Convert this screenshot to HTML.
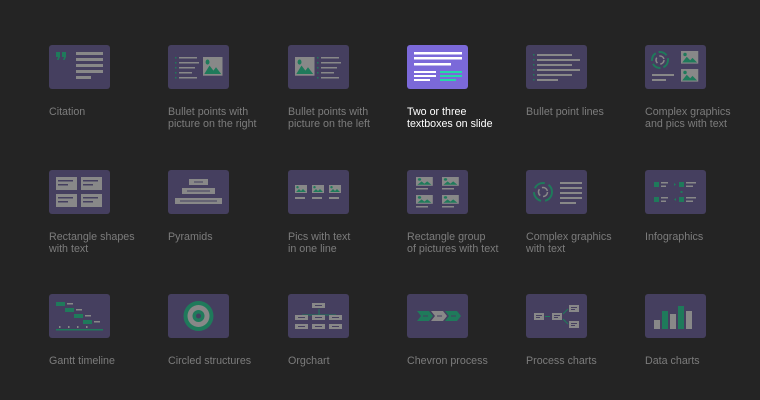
<!DOCTYPE html>
<html><head><style>
body{margin:0;background:#242424;width:760px;height:400px;overflow:hidden;font-family:"Liberation Sans",sans-serif}
.c{position:absolute;width:120px}
.c svg{display:block;width:61px;height:44px}
.l{margin-top:17px;font-size:10.7px;line-height:12px;color:#7c7c7c}
.a .l{color:#fff}
</style></head><body>
<svg width="0" height="0" style="position:absolute"><defs>
<g id="pic"><rect width="15" height="11" fill="#888"/><circle cx="3.5" cy="3" r="1.5" fill="#1f7a5b"/><path d="M1 10L5 5L8 8L10 6L14 10Z" fill="#1f7a5b"/></g>
<g id="spic"><rect width="12" height="8" fill="#888"/><circle cx="2.5" cy="2.2" r="1.2" fill="#1f7a5b"/><path d="M1 7L4 4L6 6L8 4L11 7Z" fill="#1f7a5b"/></g>
</defs></svg>

<div class="c" style="left:49px;top:45px"><svg viewBox="0 0 61 44"><rect width="61" height="44" rx="3" fill="#453f5f"/><path d="M7 7h4v5l-1.5 3h-1.5l1-3h-2z" fill="#1f7a5b"/><path d="M13 7h4v5l-1.5 3h-1.5l1-3h-2z" fill="#1f7a5b"/><g fill="#888"><rect x="27" y="7" width="27" height="3"/><rect x="27" y="13" width="27" height="3"/><rect x="27" y="19" width="27" height="3"/><rect x="27" y="25" width="27" height="3"/><rect x="27" y="31" width="15" height="3"/></g></svg><div class="l">Citation</div></div>

<div class="c" style="left:168px;top:45px"><svg viewBox="0 0 61 44"><rect width="61" height="44" rx="3" fill="#453f5f"/><g fill="#1f7a5b"><rect x="7" y="12" width="1.5" height="1.5"/><rect x="7" y="17" width="1.5" height="1.5"/><rect x="7" y="22" width="1.5" height="1.5"/><rect x="7" y="27" width="1.5" height="1.5"/><rect x="7" y="32" width="1.5" height="1.5"/></g><g fill="#888"><rect x="11" y="12" width="18" height="1.5"/><rect x="11" y="17" width="20" height="1.5"/><rect x="11" y="22" width="16" height="1.5"/><rect x="11" y="27" width="13" height="1.5"/><rect x="11" y="32" width="18" height="1.5"/></g><use href="#pic" transform="translate(35,12) scale(1.3,1.7)"/></svg><div class="l">Bullet points with<br>picture on the right</div></div>

<div class="c" style="left:288px;top:45px"><svg viewBox="0 0 61 44"><rect width="61" height="44" rx="3" fill="#453f5f"/><use href="#pic" transform="translate(7,12) scale(1.3,1.7)"/><g fill="#1f7a5b"><rect x="29" y="12" width="1.5" height="1.5"/><rect x="29" y="17" width="1.5" height="1.5"/><rect x="29" y="22" width="1.5" height="1.5"/><rect x="29" y="27" width="1.5" height="1.5"/><rect x="29" y="32" width="1.5" height="1.5"/></g><g fill="#888"><rect x="33" y="12" width="18" height="1.5"/><rect x="33" y="17" width="20" height="1.5"/><rect x="33" y="22" width="16" height="1.5"/><rect x="33" y="27" width="13" height="1.5"/><rect x="33" y="32" width="18" height="1.5"/></g></svg><div class="l">Bullet points with<br>picture on the left</div></div>

<div class="c a" style="left:407px;top:45px"><svg viewBox="0 0 61 44"><rect width="61" height="44" rx="3" fill="#7b69d9"/><g fill="#fff"><rect x="7" y="7" width="48" height="2.5"/><rect x="7" y="12" width="48" height="2.5"/><rect x="7" y="18" width="37" height="2.5"/><rect x="7" y="26" width="22" height="2"/><rect x="7" y="30" width="22" height="2"/><rect x="7" y="34" width="16" height="2"/></g><g fill="#25d9a7"><rect x="33" y="26" width="22" height="2"/><rect x="33" y="30" width="22" height="2"/><rect x="33" y="34" width="16" height="2"/></g></svg><div class="l">Two or three<br>textboxes on slide</div></div>

<div class="c" style="left:526px;top:45px"><svg viewBox="0 0 61 44"><rect width="61" height="44" rx="3" fill="#453f5f"/><g fill="#1f7a5b"><rect x="7" y="9" width="1.5" height="1.5"/><rect x="7" y="14" width="1.5" height="1.5"/><rect x="7" y="19" width="1.5" height="1.5"/><rect x="7" y="24" width="1.5" height="1.5"/><rect x="7" y="29" width="1.5" height="1.5"/><rect x="7" y="34" width="1.5" height="1.5"/></g><g fill="#888"><rect x="11" y="9" width="35" height="2"/><rect x="11" y="14" width="43" height="2"/><rect x="11" y="19" width="35" height="2"/><rect x="11" y="24" width="43" height="2"/><rect x="11" y="29" width="35" height="2"/><rect x="11" y="34" width="21" height="2"/></g></svg><div class="l">Bullet point lines</div></div>

<div class="c" style="left:645px;top:45px"><svg viewBox="0 0 61 44"><rect width="61" height="44" rx="3" fill="#453f5f"/><circle cx="15" cy="15" r="8" fill="none" stroke="#1f7a5b" stroke-width="2" stroke-dasharray="9 3"/><circle cx="15" cy="15" r="4" fill="none" stroke="#888" stroke-width="1.5" stroke-dasharray="6 3"/><rect x="7" y="29" width="22" height="2" fill="#888"/><rect x="7" y="34" width="14" height="2" fill="#888"/><use href="#pic" transform="translate(36,6) scale(1.15,1.15)"/><use href="#pic" transform="translate(36,24) scale(1.15,1.15)"/></svg><div class="l">Complex graphics<br>and pics with text</div></div>

<div class="c" style="left:49px;top:170px"><svg viewBox="0 0 61 44"><rect width="61" height="44" rx="3" fill="#453f5f"/><g fill="#888"><rect x="7" y="7" width="21" height="13"/><rect x="32" y="7" width="21" height="13"/><rect x="7" y="24" width="21" height="13"/><rect x="32" y="24" width="21" height="13"/></g><g fill="#453f5f"><rect x="9" y="10" width="15" height="1.5"/><rect x="9" y="14" width="10" height="1.5"/><rect x="34" y="10" width="15" height="1.5"/><rect x="34" y="14" width="10" height="1.5"/><rect x="9" y="27" width="15" height="1.5"/><rect x="9" y="31" width="10" height="1.5"/><rect x="34" y="27" width="15" height="1.5"/><rect x="34" y="31" width="10" height="1.5"/></g></svg><div class="l">Rectangle shapes<br>with text</div></div>

<div class="c" style="left:168px;top:170px"><svg viewBox="0 0 61 44"><rect width="61" height="44" rx="3" fill="#453f5f"/><g fill="#888"><rect x="21" y="9" width="19" height="6"/><rect x="14" y="18" width="33" height="6"/><rect x="7" y="28" width="47" height="6"/></g><g fill="#453f5f"><rect x="26" y="11.5" width="9" height="1"/><rect x="19" y="20.5" width="23" height="1"/><rect x="12" y="30.5" width="37" height="1"/></g></svg><div class="l">Pyramids</div></div>

<div class="c" style="left:288px;top:170px"><svg viewBox="0 0 61 44"><rect width="61" height="44" rx="3" fill="#453f5f"/><use href="#spic" transform="translate(7,15)"/><use href="#spic" transform="translate(24,15)"/><use href="#spic" transform="translate(41,15)"/><g fill="#888"><rect x="7" y="27" width="10" height="2"/><rect x="24" y="27" width="10" height="2"/><rect x="41" y="27" width="10" height="2"/></g></svg><div class="l">Pics with text<br>in one line</div></div>

<div class="c" style="left:407px;top:170px"><svg viewBox="0 0 61 44"><rect width="61" height="44" rx="3" fill="#453f5f"/><use href="#spic" transform="translate(9,7) scale(1.4,1.1)"/><use href="#spic" transform="translate(35,7) scale(1.4,1.1)"/><use href="#spic" transform="translate(9,25) scale(1.4,1.1)"/><use href="#spic" transform="translate(35,25) scale(1.4,1.1)"/><g fill="#888"><rect x="9" y="18" width="12" height="1.5"/><rect x="35" y="18" width="12" height="1.5"/><rect x="9" y="36" width="12" height="1.5"/><rect x="35" y="36" width="12" height="1.5"/></g></svg><div class="l">Rectangle group<br>of pictures with text</div></div>

<div class="c" style="left:526px;top:170px"><svg viewBox="0 0 61 44"><rect width="61" height="44" rx="3" fill="#453f5f"/><circle cx="17" cy="22" r="9" fill="none" stroke="#1f7a5b" stroke-width="2" stroke-dasharray="12 4"/><circle cx="17" cy="22" r="4.5" fill="none" stroke="#888" stroke-width="1.5" stroke-dasharray="7 3"/><g fill="#888"><rect x="34" y="12" width="22" height="2"/><rect x="34" y="17" width="22" height="2"/><rect x="34" y="22" width="22" height="2"/><rect x="34" y="27" width="22" height="2"/><rect x="34" y="32" width="16" height="2"/></g></svg><div class="l">Complex graphics<br>with text</div></div>

<div class="c" style="left:645px;top:170px"><svg viewBox="0 0 61 44"><rect width="61" height="44" rx="3" fill="#453f5f"/><g fill="#1f7a5b"><rect x="9" y="12" width="5" height="5"/><rect x="34" y="12" width="5" height="5"/><rect x="9" y="27" width="5" height="5"/><rect x="34" y="27" width="5" height="5"/><path d="M29 13l2 1.5l-2 1.5z"/><path d="M31 28l-2 1.5l2 1.5z"/><rect x="35.5" y="21" width="2" height="2"/></g><g fill="#888"><rect x="16" y="12" width="7" height="1.5"/><rect x="16" y="15.5" width="5" height="1.5"/><rect x="41" y="12" width="10" height="1.5"/><rect x="41" y="15.5" width="7" height="1.5"/><rect x="16" y="27" width="7" height="1.5"/><rect x="16" y="30.5" width="5" height="1.5"/><rect x="41" y="27" width="10" height="1.5"/><rect x="41" y="30.5" width="7" height="1.5"/></g></svg><div class="l">Infographics</div></div>

<div class="c" style="left:49px;top:294px"><svg viewBox="0 0 61 44"><rect width="61" height="44" rx="3" fill="#453f5f"/><g fill="#1f7a5b"><rect x="7" y="8" width="9" height="4"/><rect x="16" y="14" width="9" height="4"/><rect x="25" y="20" width="9" height="4"/><rect x="34" y="26" width="9" height="4"/><rect x="7" y="35" width="47" height="1.5"/></g><g fill="#888"><rect x="18" y="9" width="6" height="1.5"/><rect x="27" y="15" width="6" height="1.5"/><rect x="36" y="21" width="6" height="1.5"/><rect x="45" y="27" width="6" height="1.5"/><rect x="10" y="32" width="1.5" height="2"/><rect x="19" y="32" width="1.5" height="2"/><rect x="28" y="32" width="1.5" height="2"/><rect x="37" y="32" width="1.5" height="2"/></g></svg><div class="l">Gantt timeline</div></div>

<div class="c" style="left:168px;top:294px"><svg viewBox="0 0 61 44"><rect width="61" height="44" rx="3" fill="#453f5f"/><circle cx="30.5" cy="22" r="15" fill="#1f7a5b"/><circle cx="30.5" cy="22" r="11" fill="#888"/><circle cx="30.5" cy="22" r="6" fill="#1f7a5b"/><circle cx="30.5" cy="22" r="2.5" fill="#453f5f"/></svg><div class="l">Circled structures</div></div>

<div class="c" style="left:288px;top:294px"><svg viewBox="0 0 61 44"><rect width="61" height="44" rx="3" fill="#453f5f"/><g stroke="#1f7a5b" stroke-width="1" fill="none"><path d="M31 15v6M14 21h34M14 21v3M31 21v3M48 21v3"/></g><g fill="#888"><rect x="24" y="9" width="13" height="5"/><rect x="7" y="21" width="13" height="5"/><rect x="24" y="21" width="13" height="5"/><rect x="41" y="21" width="13" height="5"/><rect x="7" y="30" width="13" height="5"/><rect x="24" y="30" width="13" height="5"/><rect x="41" y="30" width="13" height="5"/></g><g fill="#453f5f"><rect x="27" y="11" width="7" height="1"/><rect x="10" y="23" width="7" height="1"/><rect x="27" y="23" width="7" height="1"/><rect x="44" y="23" width="7" height="1"/><rect x="10" y="32" width="7" height="1"/><rect x="27" y="32" width="7" height="1"/><rect x="44" y="32" width="7" height="1"/></g></svg><div class="l">Orgchart</div></div>

<div class="c" style="left:407px;top:294px"><svg viewBox="0 0 61 44"><rect width="61" height="44" rx="3" fill="#453f5f"/><path d="M10 17h12l4 5l-4 5h-12l4-5z" fill="#1f7a5b"/><path d="M24 17h12l4 5l-4 5h-12l4-5z" fill="#888"/><path d="M38 17h12l4 5l-4 5h-12l4-5z" fill="#1f7a5b"/><g fill="#453f5f"><rect x="16" y="21.5" width="5" height="1"/><rect x="30" y="21.5" width="5" height="1"/><rect x="44" y="21.5" width="5" height="1"/></g></svg><div class="l">Chevron process</div></div>

<div class="c" style="left:526px;top:294px"><svg viewBox="0 0 61 44"><rect width="61" height="44" rx="3" fill="#453f5f"/><g fill="#888"><rect x="8" y="19" width="10" height="7"/><rect x="26" y="19" width="10" height="7"/><rect x="43" y="11" width="10" height="7"/><rect x="43" y="27" width="10" height="7"/></g><g fill="#453f5f"><rect x="10" y="21" width="6" height="1"/><rect x="10" y="23" width="4" height="1"/><rect x="28" y="21" width="6" height="1"/><rect x="28" y="23" width="4" height="1"/><rect x="45" y="13" width="6" height="1"/><rect x="45" y="15" width="4" height="1"/><rect x="45" y="29" width="6" height="1"/><rect x="45" y="31" width="4" height="1"/></g><g stroke="#1f7a5b" fill="none" stroke-width="1"><path d="M19 22.5h5M37 20l5-5M37 25l5 5"/></g></svg><div class="l">Process charts</div></div>

<div class="c" style="left:645px;top:294px"><svg viewBox="0 0 61 44"><rect width="61" height="44" rx="3" fill="#453f5f"/><rect x="9" y="26" width="6" height="9" fill="#888"/><rect x="17" y="17" width="6" height="18" fill="#1f7a5b"/><rect x="25" y="20" width="6" height="15" fill="#888"/><rect x="33" y="12" width="6" height="23" fill="#1f7a5b"/><rect x="41" y="17" width="6" height="18" fill="#888"/></svg><div class="l">Data charts</div></div>
</body></html>
